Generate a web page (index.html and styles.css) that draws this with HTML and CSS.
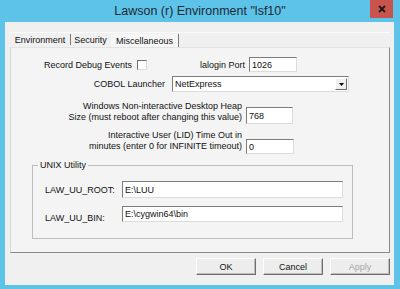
FILE: index.html
```html
<!DOCTYPE html>
<html>
<head>
<meta charset="utf-8">
<link rel="stylesheet" href="styles.css">
</head>
<body>
<div class="window">
  <div class="titlebar">
    <div class="title">Lawson (r) Environment "lsf10"</div>
    <div class="close">
      <svg width="8" height="8" viewBox="0 0 8 8"><path d="M1 1L7 7M7 1L1 7" stroke="#1a1a1a" stroke-width="1.8"/></svg>
    </div>
  </div>
  <div class="client">
    <div class="tabs">
      <div class="tab tab-env">Environment</div>
      <div class="tab tab-sec">Security</div>
      <div class="tab tab-misc active">Miscellaneous</div>
    </div>
    <div class="panel">
      <div class="row row1">
        <span class="lbl lbl-debug">Record Debug Events</span>
        <span class="check"></span>
        <span class="lbl lbl-port">lalogin Port</span>
        <span class="field f-port">1026</span>
      </div>
      <div class="row row2">
        <span class="lbl lbl-cobol">COBOL Launcher</span>
        <span class="combo">
          <span class="combo-text">NetExpress</span>
          <span class="combo-btn"><svg width="5" height="3" viewBox="0 0 5 3"><path d="M0 0H5L2.5 3Z" fill="#000"/></svg></span>
        </span>
      </div>
      <div class="row row3">
        <span class="lbl lbl-two">Windows Non-interactive Desktop Heap<br>Size (must reboot after changing this value)</span>
        <span class="field f-heap">768</span>
      </div>
      <div class="row row4">
        <span class="lbl lbl-two lbl-lid">Interactive User (LID) Time Out in<br>minutes (enter 0 for INFINITE timeout)</span>
        <span class="field f-lid">0</span>
      </div>
      <fieldset class="group">
        <legend>UNIX Utility</legend>
        <div class="grow">
          <span class="lbl glbl">LAW_UU_ROOT:</span>
          <span class="field gfield gfield-root">E:\LUU</span>
        </div>
        <div class="grow grow-bin">
          <span class="lbl glbl glbl-bin">LAW_UU_BIN:</span>
          <span class="field gfield">E:\cygwin64\bin</span>
        </div>
      </fieldset>
    </div>
    <div class="buttons">
      <button class="btn">OK</button>
      <button class="btn">Cancel</button>
      <button class="btn disabled">Apply</button>
    </div>
  </div>
</div>
</body>
</html>
```
FILE: styles.css
```css
* { box-sizing: border-box; }
html, body { margin: 0; padding: 0; }
body {
  font-family: "Liberation Sans", Arial, sans-serif;
  font-size: 9px;
  color: #111;
}
.window {
  width: 400px;
  height: 289px;
  background: #5ec3e8;
  display: flex;
  flex-direction: column;
}
.titlebar {
  height: 22px;
  display: grid;
  grid-template-columns: 1fr auto 1fr;
  align-items: start;
}
.title {
  grid-column: 2;
  font-family: "Liberation Sans", Arial, sans-serif;
  font-size: 12.5px;
  line-height: 23px;
  color: #1e2a33;
}
.close {
  grid-column: 3;
  justify-self: end;
  width: 23px;
  height: 18px;
  margin-right: 7px;
  background: #c9544d;
  display: flex;
  align-items: center;
  justify-content: center;
}
.client {
  flex: 1;
  margin: 0 6px 4px 5px;
  background: #f0f0f0;
  padding: 10px 4px 0 5px;
  display: flex;
  flex-direction: column;
}
.tabs {
  display: flex;
  height: 15px;
  align-items: stretch;
  border-top: 1px solid #fafafa;
}
.tab {
  display: flex;
  align-items: center;
  justify-content: center;
  border-right: 1px solid #7a7a7a;
  margin: 1px 0 2px;
}
.tab-env { width: 61px; }
.tab-sec { width: 40px; border-right-color: transparent; }
.tab-misc { width: 68px; }
.tab.active { background: #f6f6f6; margin-bottom: 0; }
.panel {
  height: 206px;
  background: #f4f4f4;
  border: 1px solid;
  border-color: #e4e4e4 #8a8a8a #8a8a8a #d6d6d6;
  padding: 9px 0 0 0;
  display: flex;
  flex-direction: column;
}
.row { display: flex; align-items: center; }
.lbl { white-space: nowrap; }
.field {
  display: flex;
  align-items: center;
  background: #fff;
  border: 1px solid;
  border-color: #7c7c7c #dcdcdc #dcdcdc #7c7c7c;
  padding: 0 2px;
  white-space: nowrap;
}
.row1 { height: 15px; }
.lbl-debug { width: 121px; text-align: right; }
.check {
  width: 10px;
  height: 10px;
  margin-left: 5px;
  background: #fff;
  border: 1px solid;
  border-color: #6e6e6e #dcdcdc #dcdcdc #6e6e6e;
}
.lbl-port { margin-left: 53px; }
.f-port { margin-left: 4px; width: 48px; height: 15px; }
.row2 { height: 16px; margin-top: 4px; }
.lbl-cobol { width: 154px; text-align: right; }
.combo {
  margin-left: 7px;
  width: 177px;
  height: 16px;
  display: flex;
  align-items: stretch;
  background: #fff;
  border: 1px solid;
  border-color: #7c7c7c #dcdcdc #dcdcdc #7c7c7c;
}
.combo-text { flex: 1; padding-left: 2px; display: flex; align-items: center; }
.combo-btn {
  width: 12px;
  margin: 1px 1px 1px 0;
  background: #f0f0f0;
  border: 1px solid;
  border-color: #fff #6a6a6a #6a6a6a #fff;
  display: flex;
  align-items: center;
  justify-content: center;
}
.row3 { margin-top: 9px; align-items: flex-end; }
.lbl-two { width: 231px; text-align: right; line-height: 11px; margin-bottom: 1px; }
.f-heap { margin-left: 4px; width: 47px; height: 17px; }
.row4 { margin-top: 6px; align-items: flex-end; }
.lbl-lid { margin-bottom: 2px; }
.f-lid { margin-left: 4px; width: 48px; height: 15px; }
.group {
  margin: 6px 0 0 21px;
  width: 321px;
  border: 1px solid #bdbdbd;
  padding: 10px 0 16px 12px;
  min-width: 0;
}
.group legend {
  padding: 0 2px;
  margin-left: -7px;
  line-height: 11px;
}
.grow { display: flex; align-items: center; height: 17px; }
.grow-bin { margin-top: 8px; height: 16px; }
.glbl { width: 77px; }
.glbl-bin { padding-top: 8px; }
.gfield { width: 221px; height: 100%; }
.buttons {
  display: flex;
  justify-content: flex-end;
  gap: 7px;
  margin-top: 5px;
}
.btn {
  width: 60px;
  height: 17px;
  padding: 0;
  font-family: "Liberation Sans", Arial, sans-serif;
  font-size: 9px;
  color: #111;
  background: #ededed;
  border: 1px solid;
  border-color: #fdfdfd #6e6e6e #6e6e6e #fdfdfd;
  box-shadow: inset -1px -1px 0 #bdbdbd;
}
.btn.disabled { color: #a8a8a8; }
```
